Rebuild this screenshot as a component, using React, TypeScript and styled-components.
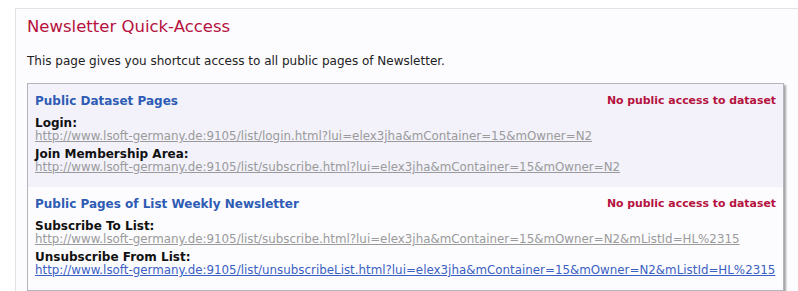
import * as React from 'react';
import styled, { createGlobalStyle } from 'styled-components';

const GlobalStyle = createGlobalStyle`
    html, body {
        margin: 0;
        padding: 0;
        background: #ffffff;
    }
    body {
        font-family: "DejaVu Sans", Verdana, sans-serif;
        font-size: 12px;
        color: #222222;
    }
`;

const Page = styled.div`
    padding: 8px 0 0 15px;
    width: 798px;
    height: 291px;
    box-sizing: border-box;
    overflow: hidden;
`;

const Panel = styled.div`
    border: 1px solid #e2e2e4;
    border-right: none;
    background: #fcfbfd;
    padding: 8px 0 20px 11px;
    min-height: 300px;
`;

const Title = styled.h1`
    margin: 0;
    font-size: 16.5px;
    font-weight: normal;
    line-height: 20px;
    color: #b5123e;
`;

const Intro = styled.p`
    margin: 17px 0 0;
    line-height: 14px;
`;

const Box = styled.div`
    margin-top: 15px;
    width: 755px;
    border: 1px solid #b4b4bc;
    box-shadow: 2px 2px 2px rgba(0, 0, 0, 0.35);
    background: #fcfcfe;
`;

const Section = styled.div<{ $shaded?: boolean }>`
    background: ${p => (p.$shaded ? '#f3f2fb' : 'transparent')};
    padding: 10px 7px 13px 7px;
`;

const SectionHead = styled.div`
    display: flex;
    justify-content: space-between;
    align-items: center;
    line-height: 14px;
    margin-bottom: 9px;
`;

const SectionTitle = styled.span`
    font-weight: bold;
    color: #2e5cb4;
    font-size: 12px;
`;

const Notice = styled.span`
    font-weight: bold;
    color: #b5123e;
    font-size: 10.9px;
`;

const Item = styled.div`
    & + & {
        margin-top: 5px;
    }
`;

const Label = styled.div`
    font-weight: bold;
    color: #111111;
    line-height: 13px;
`;

const Url = styled.a<{ $active?: boolean }>`
    display: block;
    line-height: 13px;
    font-size: 11.86px;
    color: ${p => (p.$active ? '#3a5fc4' : '#9a9a9a')};
    text-decoration: underline;
    white-space: nowrap;
`;

const base = 'http://www.lsoft-germany.de:9105/list/';

const sections = [
    {
        title: 'Public Dataset Pages',
        shaded: true,
        items: [
            { label: 'Login:', url: base + 'login.html?lui=elex3jha&mContainer=15&mOwner=N2' },
            { label: 'Join Membership Area:', url: base + 'subscribe.html?lui=elex3jha&mContainer=15&mOwner=N2' }
        ]
    },
    {
        title: 'Public Pages of List Weekly Newsletter',
        shaded: false,
        items: [
            { label: 'Subscribe To List:', url: base + 'subscribe.html?lui=elex3jha&mContainer=15&mOwner=N2&mListId=HL%2315' },
            { label: 'Unsubscribe From List:', url: base + 'unsubscribeList.html?lui=elex3jha&mContainer=15&mOwner=N2&mListId=HL%2315', active: true }
        ]
    }
];

export default function App() {
    return (
        <Page>
            <GlobalStyle />
            <Panel>
                <Title>Newsletter Quick-Access</Title>
                <Intro>This page gives you shortcut access to all public pages of Newsletter.</Intro>
                <Box>
                    {sections.map((section, index) => (
                        <Section key={index} $shaded={section.shaded}>
                            <SectionHead>
                                <SectionTitle>{section.title}</SectionTitle>
                                <Notice>No public access to dataset</Notice>
                            </SectionHead>
                            {section.items.map((item, i) => (
                                <Item key={i}>
                                    <Label>{item.label}</Label>
                                    <Url href="javascript:void(0)" $active={item.active}>{item.url}</Url>
                                </Item>
                            ))}
                        </Section>
                    ))}
                </Box>
            </Panel>
        </Page>
    );
}
